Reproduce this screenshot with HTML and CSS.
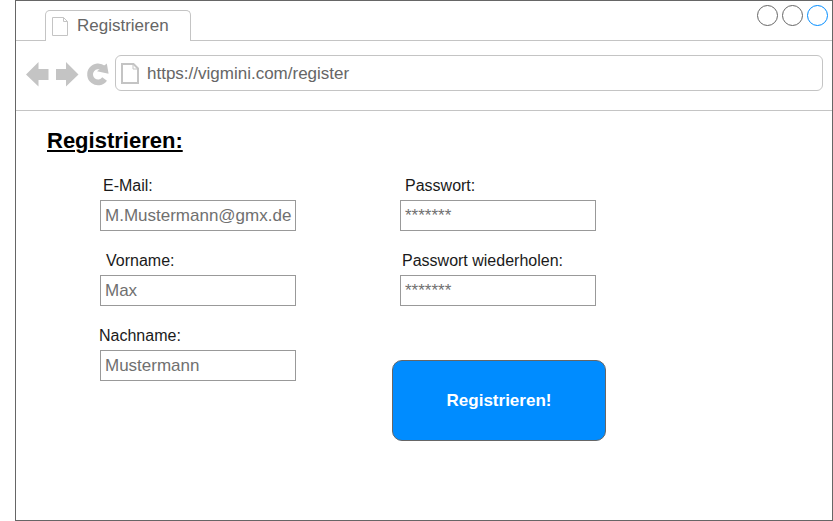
FILE: index.html
```
<!DOCTYPE html>
<html lang="de">
<head>
<meta charset="utf-8">
<title>Registrieren</title>
<link rel="stylesheet" href="styles.css">
</head>
<body>
<div class="window">
  <header class="tabs">
    <div class="tab">
      <svg class="tab-icon" width="16" height="19" viewBox="0 0 16 19"><path d="M.5.5h11l4 4v14H.5zM11.5.5v4h4" fill="none" stroke="#c4c4c4"/></svg>
      <span>Registrieren</span>
    </div>
    <svg class="controls" width="72" height="22" viewBox="0 0 72 22" fill="none"><circle cx="11.500" cy="11.500" r="10" stroke="#666"/><circle cx="36.500" cy="11.500" r="10" stroke="#666"/><circle cx="61.500" cy="11.500" r="10" stroke="#008cff"/></svg>
  </header>
  <nav class="toolbar">
    <svg class="nav-icons" width="84" height="26" viewBox="0 0 84 26" fill="#c4c4c4">
      <path d="M0 12.500 12.500 0v7H22.500v11H12.500v6.500z"/>
      <path d="M52.500 12.500 40 0v7H30v11h10v6.500z"/>
      <path d="M77.300 6.300A8 8 0 1 0 78.600 17" fill="none" stroke="#c4c4c4" stroke-width="5.800"/>
      <path d="M80.800 1.500l1.800 10.300-11.600-2.500z"/>
    </svg>
    <div class="url">
      <svg class="url-icon" width="18" height="21" viewBox="0 0 18 21" fill="none" stroke="#c4c4c4"><path d="M1 1h11.500L17 5.500V20H1z" stroke-width="2"/><path d="M12 1v5h5"/></svg>
      <span>https://vigmini.com/register</span>
    </div>
  </nav>
  <main>
    <h1>Registrieren:</h1>
    <form class="form">
      <div class="column">
        <div class="field"><label class="email" for="email">E-Mail:</label><input id="email" value="M.Mustermann@gmx.de"></div>
        <div class="field"><label class="first" for="first">Vorname:</label><input id="first" value="Max"></div>
        <div class="field"><label class="last" for="last">Nachname:</label><input id="last" value="Mustermann"></div>
      </div>
      <div class="column">
        <div class="field"><label class="pass" for="pass">Passwort:</label><input id="pass" value="*******"></div>
        <div class="field"><label class="repeat" for="repeat">Passwort wiederholen:</label><input id="repeat" value="*******"></div>
        <button type="button">Registrieren!</button>
      </div>
    </form>
  </main>
</div>
</body>
</html>
```
FILE: styles.css
```
* { box-sizing: border-box; }
body { margin: 0; background: #fff; font-family: "Liberation Sans", Arial, sans-serif; font-size: 17px; color: #666; }
svg { display: block; flex: none; }
.window { margin-left: 15px; width: 818px; height: 521px; border: 1px solid #666; overflow: hidden; }
.tabs { display: flex; justify-content: space-between; height: 40px; padding: 0 4px 0 29px; border-bottom: 1px solid #c4c4c4; }
.tab { display: flex; width: 146px; height: 31px; margin-top: 9px; border: 1px solid #c4c4c4; border-bottom: 0; border-radius: 5px 5px 0 0; background: #fff; line-height: 20px; padding: 5px 0 0 6px; }
.tab-icon { margin: 1px 9px 0 0; }
.controls { margin-top: 3px; }
.toolbar { display: flex; height: 70px; padding: 14px 9px 0 10px; border-bottom: 1px solid #c4c4c4; }
.nav-icons { margin: 7px 5px 0 0; }
.url { display: flex; flex: 1; height: 36px; border: 1px solid #c4c4c4; border-radius: 6px; padding: 7px 0 0 5px; line-height: 21px; }
.url-icon { margin: 0 8px 0 0; }
main { padding: 17px 0 0 31px; }
h1 { margin: 0; font-size: 22px; line-height: 26px; color: #000; text-decoration: underline; text-decoration-thickness: 2px; text-underline-offset: 2px; }
.form { display: flex; gap: 104px; margin: 20px 0 0 53px; }
.column { width: 196px; }
.field { height: 75px; }
label { display: block; width: max-content; height: 26px; line-height: 24px; font-size: 16px; color: #1a1a1a; white-space: nowrap; }
.email { margin-left: 3px; }
.first { margin-left: 6px; }
.last { margin-left: -1px; }
.pass { margin-left: 5px; }
.repeat { margin-left: 2px; }
input { display: block; width: 196px; height: 31px; margin: 0; padding: 0 0 0 4px; border: 1px solid #999; border-radius: 0; background: #fff; color: #707070; font: 17px "Liberation Sans", Arial, sans-serif; }
button { display: block; width: 214px; height: 81px; margin: 36px 0 0 -8px; padding: 0; border: 1px solid #666; border-radius: 10px; background: #008cff; color: #fff; font: bold 17px "Liberation Sans", Arial, sans-serif; }
```
